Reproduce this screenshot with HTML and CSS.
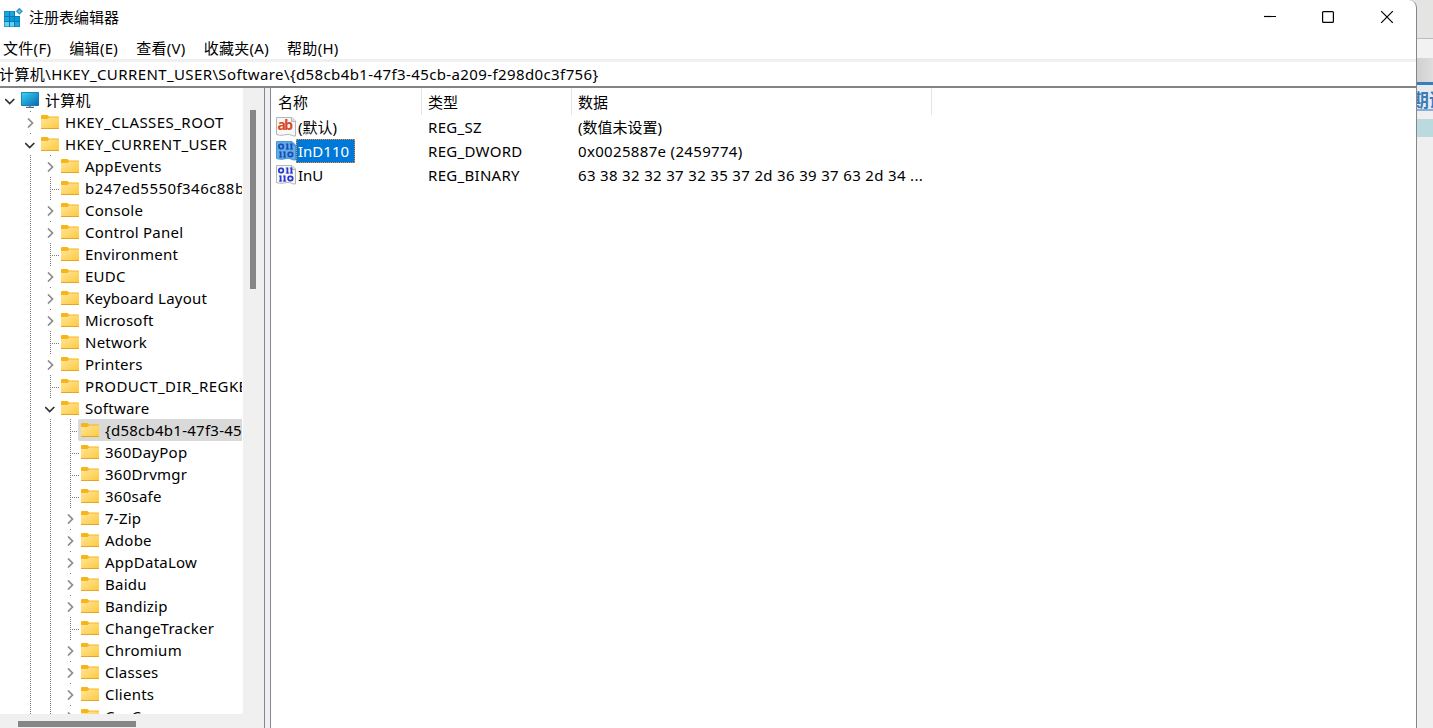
FILE: index.html
```html
<!DOCTYPE html>
<html lang="zh-CN">
<head>
  <meta charset="UTF-8" />
  <title>注册表编辑器</title>
  <link rel="stylesheet" href="styles.css">
</head>
<body>
  <!-- Shared icons -->
  <svg class="defs" width="0" height="0">
    <defs>
      <linearGradient id="folderFill" x1="0" y1="0" x2="1" y2="1">
        <stop offset="0" stop-color="#ffe69b" />
        <stop offset="1" stop-color="#fdc93e" />
      </linearGradient>
      <linearGradient id="screenFill" x1="0" y1="0" x2="1" y2="1">
        <stop offset="0" stop-color="#36d5ee" />
        <stop offset="1" stop-color="#0b67b5" />
      </linearGradient>
      <symbol id="folder" viewBox="0 0 18 14">
        <path d="M0 1Q0 0 1 0H6.5L8 1.5H17.3Q18 1.5 18 2.5V6H0Z" fill="#f8b518" />
        <path d="M0 4H6.5L8 2.5H18V13.5H0Z" fill="url(#folderFill)" />
        <path d="M0 13.5H18" stroke="#e5a525" stroke-width="1" />
      </symbol>
      <symbol id="computer" viewBox="0 0 18 16">
        <path d="M5 15.5H13M9 13V15" stroke="#536b7a" stroke-width="1.3" />
        <rect x="0" y="0" width="18" height="14" rx="0.7" fill="#167aac" />
        <rect x="0.8" y="0.8" width="16.4" height="12.4" fill="url(#screenFill)" />
      </symbol>
      <symbol id="open" viewBox="0 0 10 10">
        <path d="M0.2 3L4.7 7.5L9.3 3" fill="none" stroke="#303030" stroke-width="1.7" />
      </symbol>
      <symbol id="closed" viewBox="0 0 10 10">
        <path d="M3 0.5L7.5 5L3 9.5" fill="none" stroke="#8b8b8b" stroke-width="1.7" />
      </symbol>
      <symbol id="sheet" viewBox="0 0 20 20">
        <path class="paper" d="M0.5 0.5H16L19.5 4V19C16 19.5 15 17 11 17.5C7 18 5 19 0.5 17.5Z" />
        <path class="fold" d="M15.5 0.5V4.5H19.5" />
      </symbol>
      <symbol id="bits" viewBox="0 0 20 20">
        <g fill="none" stroke="currentColor" stroke-width="1.8">
          <rect x="2.9" y="3.4" width="4.4" height="4.2" rx="1.8" />
          <path d="M11.4 2.6V8.4M15.4 2.6V8.4M4.6 10.6V16.4M8.6 10.6V16.4" />
          <path d="M9.8 3.1H11.4M9.8 8H13M13.8 3.1H15.4M13.8 8H17M3 11.1H4.6M3 16H6.2M7 11.1H8.6M7 16H10.2" stroke-width="0.9" />
          <rect x="12.2" y="11.4" width="4.4" height="4.2" rx="1.8" />
        </g>
      </symbol>
    </defs>
  </svg>

  <div class="desktop">
    <div class="window">
      <div class="titlebar">
        <svg class="app-icon" viewBox="0 0 20 20">
          <rect x="1" y="4" width="16" height="16" fill="#0879b5" />
          <path d="M1.5 4.5H6V9H1.5ZM7 4.5H11V9H7ZM1.5 10H6V14H1.5ZM12 15H16.5V19.5H12Z" fill="#1ba7dc" />
          <path d="M7 10H11V14H7ZM12 10H16.5V14H12Z" fill="#079bd4" />
          <path d="M1.5 15H6V19.5H1.5ZM7 15H11V19.5H7Z" fill="#61d1f4" />
          <path d="M12 3H18V9H12Z" fill="#fff" />
          <path d="M16.4 0.8L19.9 4.3L16.4 7.8L12.9 4.3Z" fill="#3494c9" />
          <path d="M16.4 2.8V5.8M14.9 4.3H17.9" stroke="#75c8ea" />
        </svg>
        <span class="title">注册表编辑器</span>
        <svg class="controls" viewBox="0 0 140 18">
          <g fill="none" stroke="#000" stroke-width="1.2">
            <path d="M2 8.5H14" />
            <rect x="60.6" y="3.6" width="10.8" height="10.8" rx="1" />
            <path d="M119.2 3.2L130.8 14.8M130.8 3.2L119.2 14.8" />
          </g>
        </svg>
      </div>
      <div class="menubar">
        <span>文件(F)</span>
        <span>编辑(E)</span>
        <span>查看(V)</span>
        <span>收藏夹(A)</span>
        <span>帮助(H)</span>
      </div>
      <div class="address"><span>计算机\HKEY_CURRENT_USER\Software\{d58cb4b1-47f3-45cb-a209-f298d0c3f756}</span></div>

      <div class="panes">
        <div class="tree-pane">
          <div class="tree" id="tree"></div>
          <div class="scroll-y"><div class="thumb-y"></div></div>
          <div class="scroll-x"><div class="thumb-x"></div></div>
        </div>
        <div class="splitter"></div>
        <div class="list">
          <div class="list-head">
            <span>名称</span>
            <span>类型</span>
            <span>数据</span>
          </div>
          <div class="list-row">
            <div class="name">
              <svg class="value-icon" viewBox="0 0 20 20">
                <use href="#sheet" />
                <text class="ab" x="1.5" y="13" textLength="15.5">ab</text>
              </svg>
              <span>(默认)</span>
            </div>
            <span class="type">REG_SZ</span>
            <span>(数值未设置)</span>
          </div>
          <div class="list-row selected">
            <div class="name">
              <svg class="value-icon" viewBox="0 0 20 20">
                <use href="#sheet" />
                <use href="#bits" />
              </svg>
              <span>InD110</span>
            </div>
            <span class="type">REG_DWORD</span>
            <span class="data">0x0025887e (2459774)</span>
          </div>
          <div class="list-row">
            <div class="name">
              <svg class="value-icon" viewBox="0 0 20 20">
                <use href="#sheet" />
                <use href="#bits" />
              </svg>
              <span>InU</span>
            </div>
            <span class="type">REG_BINARY</span>
            <span class="data">63 38 32 32 37 32 35 37 2d 36 39 37 63 2d 34 ...</span>
          </div>
        </div>
      </div>
    </div>

    <!-- Window behind -->
    <div class="behind">
      <div class="behind-top"></div>
      <div class="behind-light"></div>
      <div class="behind-gray"></div>
      <div class="behind-tab">期证</div>
      <div class="behind-gap"></div>
      <div class="behind-teal"></div>
    </div>
  </div>

  <script src="tree.js"></script>
</body>
</html>
```
FILE: styles.css
```css
* {
  margin: 0;
  padding: 0;
  box-sizing: border-box;
}

body {
  width: 1433px;
  height: 728px;
  overflow: hidden;
  font-family: 'Noto Sans', 'Noto Sans CJK SC', sans-serif;
  font-size: 15px;
  line-height: 22px;
  color: #000;
}

svg {
  display: block;
  flex: none;
}

.defs {
  position: absolute;
}

.desktop {
  display: flex;
  height: 728px;
  background: linear-gradient(#e4e4e2 0, #e4e4e2 38px, #efefef 38px);
}

.window {
  display: flex;
  flex-direction: column;
  width: 1417px;
  height: 728px;
  background: #fff;
  border-right: 1px solid #85858b;
  border-radius: 0 8px 0 0;
  overflow: hidden;
}

.titlebar {
  display: flex;
  height: 36px;
  padding: 7px 14px 0 3px;
}

.app-icon {
  width: 20px;
  height: 20px;
}

.title {
  margin-left: 6px;
  line-height: 20px;
}

.controls {
  width: 140px;
  height: 18px;
  margin-top: 1px;
  margin-left: auto;
}

.menubar {
  display: flex;
  gap: 18px;
  height: 23px;
  padding-left: 3px;
  line-height: 25px;
  letter-spacing: 0.3px;
}

.address {
  height: 29px;
  border-top: 3px solid #f0f0f0;
  border-bottom: 2px solid #828287;
  line-height: 25px;
  letter-spacing: 0.39px;
  text-indent: -1px;
  white-space: nowrap;
}

.panes {
  display: flex;
  flex: 1;
  min-height: 0;
}

/* Key tree */
.tree-pane {
  display: grid;
  grid-template-columns: 243px 21px;
  grid-template-rows: 626px 14px;
  width: 265px;
  background: #f0f0f0;
  border-right: 1px solid #828790;
}

.tree {
  overflow: hidden;
  padding-top: 1px;
  background: #fff;
  border-right: 1px solid #fff;
  border-radius: 0 0 3px 0;
}

.node {
  display: flex;
  height: 22px;
  white-space: nowrap;
}

.guide,
.toggle {
  flex: none;
  width: 20px;
  height: 22px;
}

.guide.line {
  background: repeating-linear-gradient(#7a7a7a 0, #7a7a7a 1px, transparent 1px, transparent 2px) 10px 0 / 1px 22px no-repeat;
}

.toggle.leaf {
  background:
    repeating-linear-gradient(#7a7a7a 0, #7a7a7a 1px, transparent 1px, transparent 2px) 10px 0 / 1px 22px no-repeat,
    repeating-linear-gradient(90deg, #7a7a7a 0, #7a7a7a 1px, transparent 1px, transparent 2px) 10px 12px / 9px 1px no-repeat;
}

.toggle.branch {
  background: linear-gradient(#7a7a7a, #7a7a7a) 10px 0 / 1px 1px no-repeat;
}

.toggle svg {
  width: 10px;
  height: 10px;
  margin: 7px 0 0 5px;
}

.item {
  display: flex;
  flex: 1;
  min-width: 0;
  height: 22px;
  margin-left: -2px;
  padding-left: 3px;
  overflow: hidden;
}

.item.current {
  background: #d9d9d9;
  border-radius: 2px 0 0 2px;
}

.item svg {
  width: 18px;
  height: 14px;
  margin-top: 4px;
}

.item .pc {
  height: 16px;
  margin-top: 3px;
}

.item span {
  margin-left: 6px;
  letter-spacing: 0.25px;
}

.item .caps {
  letter-spacing: 0.45px;
}

.scroll-y {
  padding: 22px 0 0 7px;
}

.thumb-y {
  width: 6px;
  height: 179px;
  background: #868686;
}

.scroll-x {
  grid-column: span 2;
  padding: 7px 0 0 18px;
}

.thumb-x {
  width: 118px;
  height: 6px;
  background: #868686;
}

.splitter {
  width: 5px;
  background: #f0f0f0;
}

/* Value list */
.list {
  flex: 1;
  border-left: 1px solid #828790;
}

.list-head,
.list-row {
  display: grid;
  grid-template-columns: 151px 150px 360px;
  height: 24px;
  line-height: 24px;
  white-space: nowrap;
}

.list-head {
  height: 27px;
}

.list-head span {
  height: 27px;
  padding-left: 6px;
  border-right: 1px solid #e5e5e5;
  line-height: 28px;
}

.list-head span:first-child {
  padding-left: 7px;
}

.list-row > span {
  padding-left: 6px;
}

.list-row .type {
  letter-spacing: 0.3px;
}

.list-row .data {
  letter-spacing: 0.33px;
}

.name {
  display: flex;
  padding-left: 5px;
}

.name span {
  height: 24px;
  padding: 0 5px 0 1px;
  border: 1px solid transparent;
  line-height: 22px;
}

.value-icon {
  width: 20px;
  height: 20px;
  margin-top: 2px;
  color: #2738d0;
  --paper: #f7f7f7;
  --edge: #b5b5b5;
  --fold: #ddd;
}

.paper {
  fill: var(--paper);
  stroke: var(--edge);
}

.fold {
  fill: var(--fold);
  stroke: var(--edge);
}

.ab {
  font: bold 14px 'Noto Sans', sans-serif;
  fill: #d94a28;
}

.selected .name span {
  background: #0078d7;
  border: 1px dotted #ff8728;
  color: #fff;
}

.selected .value-icon {
  color: #1350b8;
  --paper: #65ace5;
  --edge: #4a96d5;
  --fold: #549edb;
}

/* Strip of the window behind */
.behind {
  width: 16px;
  overflow: hidden;
}

.behind-top {
  height: 39px;
  background: #e4e4e2;
  border-bottom: 1px solid #bcbcbc;
}

.behind-light {
  height: 19px;
  background: #f2f2f2;
}

.behind-gray {
  height: 24px;
  background: linear-gradient(90deg, #d0d0d0, #dedede);
}

.behind-tab {
  height: 29px;
  border-top: 3px solid #3c7cba;
  border-bottom: 2px solid #86b0d6;
  background: #e7ebef;
  color: #3c7cba;
  font-size: 18px;
  font-weight: bold;
  line-height: 30px;
  text-indent: -6px;
  white-space: nowrap;
}

.behind-gap {
  height: 8px;
}

.behind-teal {
  height: 18px;
  background: #bbd9de;
}
```
FILE: tree.js
```js
// [level, state, label]
const keys = [
  [0, 'open', '计算机'],
  [1, 'closed', 'HKEY_CLASSES_ROOT'],
  [1, 'open', 'HKEY_CURRENT_USER'],
  [2, 'closed', 'AppEvents'],
  [2, 'leaf', 'b247ed5550f346c88b'],
  [2, 'closed', 'Console'],
  [2, 'closed', 'Control Panel'],
  [2, 'leaf', 'Environment'],
  [2, 'closed', 'EUDC'],
  [2, 'closed', 'Keyboard Layout'],
  [2, 'closed', 'Microsoft'],
  [2, 'leaf', 'Network'],
  [2, 'closed', 'Printers'],
  [2, 'leaf', 'PRODUCT_DIR_REGKEY'],
  [2, 'open', 'Software'],
  [3, 'leaf', '{d58cb4b1-47f3-45cb-a209-f298d0c3f756}'],
  [3, 'leaf', '360DayPop'],
  [3, 'leaf', '360Drvmgr'],
  [3, 'leaf', '360safe'],
  [3, 'closed', '7-Zip'],
  [3, 'closed', 'Adobe'],
  [3, 'closed', 'AppDataLow'],
  [3, 'closed', 'Baidu'],
  [3, 'closed', 'Bandizip'],
  [3, 'leaf', 'ChangeTracker'],
  [3, 'closed', 'Chromium'],
  [3, 'closed', 'Classes'],
  [3, 'closed', 'Clients'],
  [3, 'closed', 'CocCoc']
];

const tree = document.getElementById('tree');

keys.forEach(([level, state, label]) => {
  let cells = '';
  for (let i = 0; i < level; i++) {
    cells += `<div class="guide${i > 0 ? ' line' : ''}"></div>`;
  }
  const arrow = state === 'leaf' ? '' : `<svg><use href="#${state}" /></svg>`;
  const toggle = state === 'leaf' ? 'leaf' : level > 0 ? 'branch' : '';
  const icon = level === 0 ? '<svg class="pc"><use href="#computer" /></svg>' : '<svg><use href="#folder" /></svg>';
  const current = label.startsWith('{') ? ' current' : '';
  const caps = label.includes('_') || label.startsWith('b247') ? 'caps' : '';
  tree.innerHTML += `<div class="node">${cells}<div class="toggle ${toggle}">${arrow}</div><div class="item${current}">${icon}<span class="${caps}">${label}</span></div></div>`;
});
```
